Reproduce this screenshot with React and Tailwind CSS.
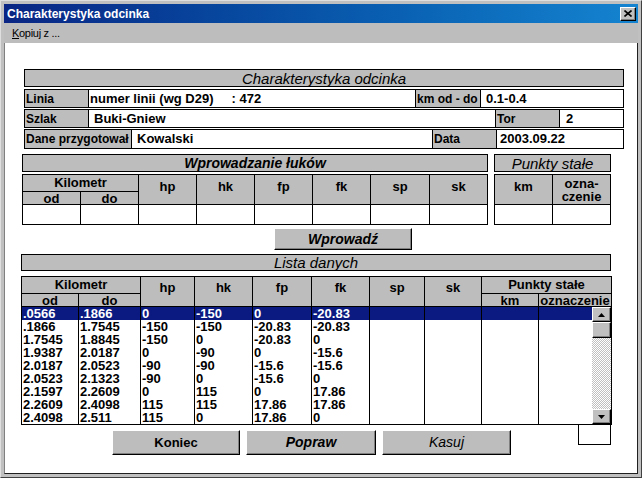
import React from "react";

// Dane listy
const rows = [
  [".0566", ".1866", "0", "-150", "0", "-20.83"],
  [".1866", "1.7545", "-150", "-150", "-20.83", "-20.83"],
  ["1.7545", "1.8845", "-150", "0", "-20.83", "0"],
  ["1.9387", "2.0187", "0", "-90", "0", "-15.6"],
  ["2.0187", "2.0523", "-90", "-90", "-15.6", "-15.6"],
  ["2.0523", "2.1323", "-90", "0", "-15.6", "0"],
  ["2.1597", "2.2609", "0", "115", "0", "17.86"],
  ["2.2609", "2.4098", "115", "115", "17.86", "17.86"],
  ["2.4098", "2.511", "115", "0", "17.86", "0"],
];

// szerokosci kolumn listy (z prawa krawedzia)
const listCols = [
  "w-[57px]", "w-[62px]", "w-[54px]", "w-[58px]", "w-[59px]",
  "w-[58px]", "w-[55px]", "w-[57px]", "w-[57px]",
];

const bevel =
  "border border-t-white border-l-white border-r-black border-b-black shadow-[inset_-1px_-1px_0_#808080]";

// Pasek naglowka sekcji
const Bar = ({ className, children }) => (
  <div className={`border border-black bg-[#bdbdbd] flex items-center justify-center italic leading-none ${className}`}>
    {children}
  </div>
);

const Label = ({ className, children }) => (
  <div className={`h-full bg-[#bdbdbd] border-r border-black pl-px flex items-center text-[12px] font-bold ${className}`}>
    {children}
  </div>
);

const Value = ({ className, children }) => (
  <div className={`h-full flex items-center text-[13px] font-bold ${className}`}>
    {children}
  </div>
);

const Button = ({ className, children }) => (
  <div className={`bg-[#bdbdbd] flex items-center justify-center ${bevel} ${className}`}>
    {children}
  </div>
);

const ScrollBtn = ({ up }) => (
  <div className={`h-[15px] bg-[#c0c0c0] flex items-center justify-center ${bevel}`}>
    <svg width="7" height="4" viewBox="0 0 7 4">
      {up ? <path d="M3.5 0 L7 4 L0 4 Z" fill="#000" /> : <path d="M0 0 L7 0 L3.5 4 Z" fill="#000" />}
    </svg>
  </div>
);

export default function App() {
  return (
    <div className="w-[642px] h-[478px] bg-[#c0c0c0] border border-t-[#dfdfdf] border-l-[#dfdfdf] border-r-[#404040] border-b-[#404040] p-[3px] flex flex-col font-['Liberation_Sans',Arial,sans-serif] text-black select-none">
      {/* Pasek tytulu */}
      <div className="h-[19px] shrink-0 bg-gradient-to-r from-[#0a2584] to-[#1584d0] flex items-center justify-between pl-[3px] pr-[2px]">
        <span className="text-white font-bold text-[12px] leading-none">Charakterystyka odcinka</span>
        <div className={`w-[16px] h-[14px] bg-[#c0c0c0] flex items-center justify-center ${bevel}`}>
          <svg width="8" height="7" viewBox="0 0 8 7">
            <path d="M0.5 0.5 L7.5 6.5 M7.5 0.5 L0.5 6.5" stroke="#000" strokeWidth="1.6" />
          </svg>
        </div>
      </div>

      {/* Menu */}
      <div className="h-[20px] shrink-0 bg-[#bdbdbd] flex items-center pl-[8px] text-[11px] tracking-[-0.3px]">
        <span><span className="underline">K</span>opiuj z ...</span>
      </div>

      {/* Obszar roboczy */}
      <div className="flex-1 bg-white border-l border-[#808080] border-r-[#202020] border-b-[#202020] border-r border-b flex flex-col">
        {/* Charakterystyka */}
        <div className="ml-[19px] mt-[26px] w-[600px] flex flex-col">
          <Bar className="h-[18px] text-[15px]">Charakterystyka odcinka</Bar>
          <div className="mt-[2px] flex flex-col gap-px">
            <div className="h-[19px] border border-black flex">
              <Label className="w-[64px]">Linia</Label>
              <Value className="w-[327px] border-r border-black pl-px whitespace-pre">numer linii (wg D29)     : 472</Value>
              <Label className="w-[65px]">km od - do</Label>
              <Value className="flex-1 pl-[5px]">0.1-0.4</Value>
            </div>
            <div className="h-[19px] border border-black flex">
              <Label className="w-[64px]">Szlak</Label>
              <Value className="w-[407px] border-r border-black pl-[5px]">Buki-Gniew</Value>
              <Label className="w-[64px]">Tor</Label>
              <Value className="flex-1 pl-[6px]">2</Value>
            </div>
            <div className="h-[20px] border border-black flex">
              <Label className="w-[107px]">Dane przygotował</Label>
              <Value className="w-[301px] border-r border-black pl-[5px]">Kowalski</Value>
              <Label className="w-[64px]">Data</Label>
              <Value className="flex-1 pl-[3px]">2003.09.22</Value>
            </div>
          </div>
        </div>

        {/* Wprowadzanie lukow */}
        <div className="ml-[17px] mt-[5px] flex gap-[6px]">
          <div className="w-[466px] flex flex-col">
            <Bar className="h-[18px] font-bold text-[14px]">Wprowadzanie łuków</Bar>
            <div className="mt-[2px] border border-black text-[13px] font-bold">
              <div className="flex h-[30px] bg-[#bdbdbd] border-b border-black">
                <div className="w-[116px] border-r border-black flex flex-col">
                  <div className="h-[17px] border-b border-black flex items-center justify-center">Kilometr</div>
                  <div className="flex-1 flex leading-none">
                    <div className="w-[58px] border-r border-black flex items-center justify-center">od</div>
                    <div className="flex-1 flex items-center justify-center">do</div>
                  </div>
                </div>
                <div className="w-[58px] border-r border-black text-center pt-[2px]">hp</div>
                <div className="w-[58px] border-r border-black text-center pt-[2px]">hk</div>
                <div className="w-[58px] border-r border-black text-center pt-[2px]">fp</div>
                <div className="w-[58px] border-r border-black text-center pt-[2px]">fk</div>
                <div className="w-[59px] border-r border-black text-center pt-[2px]">sp</div>
                <div className="flex-1 text-center pt-[2px]">sk</div>
              </div>
              <div className="flex h-[19px]">
                <div className="w-[58px] border-r border-black" />
                <div className="w-[58px] border-r border-black" />
                <div className="w-[58px] border-r border-black" />
                <div className="w-[58px] border-r border-black" />
                <div className="w-[58px] border-r border-black" />
                <div className="w-[58px] border-r border-black" />
                <div className="w-[59px] border-r border-black" />
                <div className="flex-1" />
              </div>
            </div>
          </div>

          <div className="w-[117px] flex flex-col">
            <Bar className="h-[18px] text-[15px]">Punkty stałe</Bar>
            <div className="mt-[2px] border border-black text-[13px] font-bold">
              <div className="flex h-[30px] bg-[#bdbdbd] border-b border-black">
                <div className="w-[58px] border-r border-black text-center pt-[2px]">km</div>
                <div className="flex-1 text-center leading-[13px] pt-[2px]">ozna-<br />czenie</div>
              </div>
              <div className="flex h-[19px]">
                <div className="w-[58px] border-r border-black" />
                <div className="flex-1" />
              </div>
            </div>
          </div>
        </div>

        {/* Przycisk wprowadz */}
        <Button className="ml-[269px] mt-[3px] w-[138px] h-[22px] font-bold italic text-[14px]">Wprowadź</Button>

        {/* Lista danych */}
        <div className="ml-[16px] mt-[4px] w-[590px] flex flex-col">
          <Bar className="h-[17px] text-[15px]">Lista danych</Bar>
          <div className="mt-[5px] w-[591px] border border-black text-[13px] font-bold">
            <div className="flex h-[30px] bg-[#bdbdbd] border-b border-black">
              <div className="w-[119px] border-r border-black flex flex-col">
                <div className="h-[17px] border-b border-black flex items-center justify-center">Kilometr</div>
                <div className="flex-1 flex leading-none">
                  <div className="w-[57px] border-r border-black flex items-center justify-center">od</div>
                  <div className="flex-1 flex items-center justify-center">do</div>
                </div>
              </div>
              <div className="w-[54px] border-r border-black text-center pt-px">hp</div>
              <div className="w-[58px] border-r border-black text-center pt-px">hk</div>
              <div className="w-[59px] border-r border-black text-center pt-px">fp</div>
              <div className="w-[58px] border-r border-black text-center pt-px">fk</div>
              <div className="w-[55px] border-r border-black text-center pt-px">sp</div>
              <div className="w-[57px] border-r border-black text-center pt-px">sk</div>
              <div className="flex-1 flex flex-col">
                <div className="h-[17px] border-b border-black flex items-center justify-center">Punkty stałe</div>
                <div className="flex-1 flex leading-none">
                  <div className="w-[57px] border-r border-black flex items-center justify-center">km</div>
                  <div className="flex-1 flex items-center justify-center">oznaczenie</div>
                </div>
              </div>
            </div>

            <div className="flex">
              <div className="flex-1 flex flex-col">
                {rows.map((r, i) => (
                  <div key={i} className={`flex h-[13px] leading-[13px] ${i === 0 ? "bg-[#0a1a80] text-white" : ""}`}>
                    {listCols.map((w, j) => (
                      <div key={j} className={`${w} border-r border-black pl-px overflow-hidden whitespace-nowrap`}>
                        {r[j] || ""}
                      </div>
                    ))}
                    <div className="flex-1" />
                  </div>
                ))}
              </div>
              <div className="w-[19px] flex flex-col">
                <ScrollBtn up />
                <div className={`h-[16px] bg-[#c0c0c0] ${bevel}`} />
                <div className="flex-1 bg-[repeating-conic-gradient(#c0c0c0_0%_25%,#ffffff_0%_50%)] bg-[length:2px_2px]" />
                <ScrollBtn />
              </div>
            </div>
          </div>

          {/* Przyciski */}
          <div className="flex items-start">
            <div className="flex gap-[6px] ml-[91px] mt-[5px]">
              <Button className="w-[128px] h-[25px] font-bold text-[13px]">Koniec</Button>
              <Button className="w-[130px] h-[25px] font-bold italic text-[14px]">Popraw</Button>
              <Button className="w-[129px] h-[25px] italic text-[14px]">Kasuj</Button>
            </div>
            <div className="ml-auto w-[33px] h-[20px] border border-t-0 border-black" />
          </div>
        </div>
      </div>
    </div>
  );
}
